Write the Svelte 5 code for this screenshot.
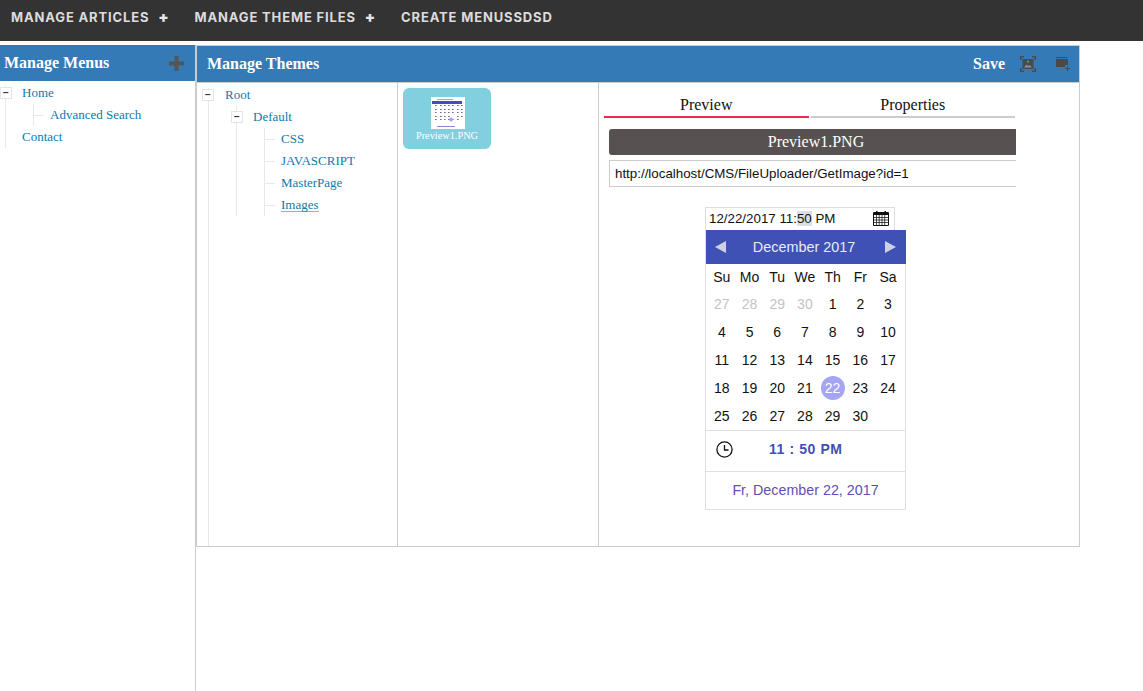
<script lang="ts">
  const weekdays = ['Su', 'Mo', 'Tu', 'We', 'Th', 'Fr', 'Sa'];
  const prev = [27, 28, 29, 30];
  const days = Array.from({ length: 30 }, (_, i) => i + 1);
  const thumbDots = [
    [4, 8], [9, 8], [13, 8], [17, 8], [21, 8], [26, 8], [30, 8],
    [4, 12], [9, 12], [13, 12], [17, 12], [21, 12], [26, 12], [30, 12],
    [4, 15], [9, 15], [13, 15], [17, 15], [21, 15], [26, 15], [30, 15],
    [4, 19], [9, 19], [13, 19], [17, 19], [26, 19], [30, 19],
    [4, 22], [9, 22], [13, 22], [17, 22], [21, 22], [26, 22]
  ];
</script>

<header class="topbar">
  <a href="#a">MANAGE ARTICLES <b>+</b></a>
  <a href="#b">MANAGE THEME FILES <b>+</b></a>
  <a href="#c">CREATE MENUSSDSD</a>
</header>

<main class="page">
  <aside class="side">
    <div class="side-head">
      <span>Manage Menus</span>
      <svg width="15" height="15" viewBox="0 0 15 15"><path d="M5.500 0h4v5.500H15v4H9.500V15h-4V9.500H0v-4h5.500z" fill="#555" /></svg>
    </div>
    <ul class="tree side-tree">
      <li class="branch">
        <i class="toggle">−</i><a href="#h">Home</a>
        <ul><li class="leaf"><a href="#s">Advanced Search</a></li></ul>
      </li>
      <li><a href="#c">Contact</a></li>
    </ul>
  </aside>

  <section class="themes">
    <div class="themes-head">
      <span class="title">Manage Themes</span>
      <span class="save">Save</span>
      <svg class="ico" width="16" height="16" viewBox="0 0 16 16" fill="#4a4a4a">
        <path d="M0 0h4v1.500H1.500V4H0zM12 0h4v4h-1.500V1.500H12zM0 12h1.500v2.500H4V16H0zM14.500 12H16v4h-4v-1.500h2.500z" />
        <path d="M2.500 3h11v10h-11z" /><path d="M4 11.500l2.500-3 1.500 1.500 1.500-1 2.500 2.500z" fill="#7f93a8" /><circle cx="8" cy="5.500" r="1" fill="#7f93a8" />
      </svg>
      <svg class="ico last" width="15" height="14" viewBox="0 0 15 14" fill="#4a4a4a">
        <path d="M0 2h12v8H0z" /><path d="M0 0h11v1H0z" />
        <path d="M9 8h5v6H9z" fill="#337ab7" />
        <path d="M11 9h1v2h2v1h-2v2h-1v-2H9v-1h2z" />
      </svg>
    </div>
    <div class="cols">
      <div class="col col-tree">
        <ul class="tree root-tree">
          <li class="branch">
            <i class="toggle">−</i><a href="#r">Root</a>
            <ul>
              <li class="branch sub">
                <i class="toggle">−</i><a href="#d">Default</a>
                <ul>
                  <li class="leaf"><a href="#1">CSS</a></li>
                  <li class="leaf"><a href="#2">JAVASCRIPT</a></li>
                  <li class="leaf"><a href="#3">MasterPage</a></li>
                  <li class="leaf"><a href="#4" class="picked">Images</a></li>
                </ul>
              </li>
            </ul>
          </li>
        </ul>
      </div>

      <div class="col col-files">
        <div class="file">
          <svg class="thumb" width="34" height="32" viewBox="0 0 34 32">
            <rect width="34" height="32" fill="#fff" />
            <rect x="1" y="4" width="30" height="3" fill="#3f51b5" />
            <rect x="6" y="2" width="16" height="1" fill="#b9a79a" />
            {#each thumbDots as d}
              <rect x={d[0]} y={d[1]} width="1.600" height="1" fill="#66688c" />
            {/each}
            <circle cx="20" cy="22.500" r="2" fill="#a5a5f2" />
            <rect x="6" y="29" width="18" height="1" fill="#8d86d0" />
          </svg>
          <span>Preview1.PNG</span>
        </div>
      </div>

      <div class="col col-detail">
        <div class="detail-clip">
          <div class="tabs">
            <div class="tab on">Preview</div>
            <div class="tab">Properties</div>
          </div>
          <div class="fname">Preview1.PNG</div>
          <div class="url">http://localhost/CMS/FileUploader/GetImage?id=1</div>

          <div class="picker">
            <div class="dt-input">
              <span>12/22/2017 11:<mark>50</mark> PM</span>
              <svg width="16" height="16" viewBox="0 0 16 16">
                <path d="M.5 2.500h15v13H.5z" fill="#fff" stroke="#111" />
                <path d="M1 2.500h14V5H1z" fill="#111" />
                <path d="M3 1h1.500v2.500H3zM11.500 1H13v2.500h-1.500z" fill="#111" />
                <path d="M1 7.500h14M1 10h14M1 12.500h14M3.500 5v10M6.200 5v10M9 5v10M11.700 5v10" stroke="#222" stroke-width=".8" />
              </svg>
            </div>
            <div class="cal">
              <div class="cal-head">
                <svg width="11" height="12" viewBox="0 0 11 12"><path d="M11 0v12L0 6z" fill="#ced1e6" /></svg>
                <span>December 2017</span>
                <svg width="11" height="12" viewBox="0 0 11 12"><path d="M0 0v12l11-6z" fill="#ced1e6" /></svg>
              </div>
              <div class="grid">
                {#each weekdays as w}<div class="wd">{w}</div>{/each}
                {#each prev as p}<div class="day dim">{p}</div>{/each}
                {#each days as d}
                  <div class="day"><span class:sel={d === 22}>{d}</span></div>
                {/each}
              </div>
              <div class="time">
                <svg width="17" height="17" viewBox="0 0 17 17" fill="none" stroke="#111" stroke-width="1.300">
                  <circle cx="8.500" cy="8.500" r="7.600" /><path d="M8.500 4v5h4" />
                </svg>
                <strong>11 : 50 PM</strong>
              </div>
              <div class="date-line">Fr, December 22, 2017</div>
            </div>
          </div>
        </div>
      </div>
    </div>
  </section>
</main>

<style>
  :global(body) {
    margin: 0;
    background: #fff;
    font-family: "Liberation Serif", "Times New Roman", serif;
    overflow: hidden;
  }
  .topbar {
    height: 41px;
    box-sizing: border-box;
    background: #333;
    display: flex;
    gap: 25px;
    padding: 9px 0 0 11px;
    font-family: Inter, "Open Sans", sans-serif;
    font-size: 13px;
    line-height: 16px;
    font-weight: 700;
    letter-spacing: 0.85px;
  }
  .topbar a { color: #dcdcdc; text-decoration: none; white-space: nowrap; }
  .topbar b { display: inline-block; margin-left: 5px; font-size: 15px; color: #e6e6e6; }
  .page {
    margin-top: 4px;
    display: flex;
    align-items: flex-start;
    height: 646px;
  }

  .side {
    width: 195px;
    height: 100%;
    flex-shrink: 0;
    border-right: 1px solid #ccc;
  }
  .side-head {
    height: 36px;
    background: #337ab7;
    color: #fff;
    display: flex;
    align-items: center;
    justify-content: space-between;
    padding: 0 11px 0 4px;
    font-size: 16px;
    font-weight: 700;
  }

  .tree, .tree ul { list-style: none; margin: 0; padding: 0; }
  .tree { font-size: 13px; line-height: 22px; }
  .tree a { color: #0e7bac; text-decoration: none; }
  .tree a.picked { border-bottom: 1px solid #aaa; line-height: 13px; display: inline-block; }
  .tree li { position: relative; }
  .toggle {
    position: absolute;
    top: 5px;
    width: 10px;
    height: 10px;
    border: 1px solid #e4e4e4;
    background: #fff;
    font: 700 10px/10px "Liberation Sans", sans-serif;
    text-align: center;
    color: #333;
    z-index: 1;
  }

  .side-tree { padding: 1px 0 0 22px; position: relative; }
  .side-tree::before {
    content: "";
    position: absolute;
    left: 5px;
    top: 4px;
    height: 63px;
    border-left: 1px solid #e9e9e9;
  }
  .side-tree > li > .toggle { left: -22px; }
  .side-tree > li > ul { padding-left: 28px; }
  .leaf::before {
    content: "";
    position: absolute;
    top: 0;
    left: -17px;
    width: 10px;
    height: 11px;
    border-left: 1px solid #e9e9e9;
    border-bottom: 1px solid #e9e9e9;
  }
  .leaf::after {
    content: "";
    position: absolute;
    left: -17px;
    top: 11px;
    height: 11px;
    border-left: 1px solid #e9e9e9;
  }

  .themes {
    width: 884px;
    height: 502px;
    box-sizing: border-box;
    border: 1px solid #ccc;
    display: flex;
    flex-direction: column;
  }
  .themes-head {
    height: 36px;
    flex-shrink: 0;
    background: #337ab7;
    border-bottom: 1px solid #ccc;
    color: #fff;
    display: flex;
    align-items: center;
    padding: 0 8px 0 10px;
    font-size: 16px;
    font-weight: 700;
  }
  .title { flex: 1; }
  .save { margin-right: 15px; }
  .ico { margin-right: 20px; }
  .ico.last { margin-right: 0; }

  .cols { flex: 1; display: flex; min-height: 0; }
  .col { box-sizing: border-box; border-right: 1px solid #ccc; position: relative; }
  .col-tree { width: 201px; }
  .col-files { width: 201px; padding: 5px; }
  .col-detail { flex: 1; border-right: 0; overflow: hidden; }

  .root-tree { padding: 1px 0 0 28px; position: relative; }
  .root-tree::before {
    content: "";
    position: absolute;
    left: 11px;
    top: 5px;
    height: 458px;
    border-left: 1px solid #e9e9e9;
  }
  .root-tree > li > .toggle { left: -23px; }
  .root-tree > li > ul { padding-left: 28px; }
  .sub > .toggle { left: -22px; }
  .sub::before {
    content: "";
    position: absolute;
    left: -17px;
    top: 0;
    height: 110px;
    border-left: 1px solid #e9e9e9;
  }
  .sub > ul { padding-left: 28px; }

  .file {
    width: 88px;
    height: 61px;
    border-radius: 6px;
    background: #81cfdf;
    color: #fff;
    font-size: 10.300px;
    display: flex;
    flex-direction: column;
    align-items: center;
    padding-top: 9px;
    box-sizing: border-box;
    line-height: 12px;
  }
  .thumb { margin: 0 0 1px 2px; }

  .detail-clip { width: 417px; overflow: hidden; padding-left: 5px; box-sizing: border-box; }
  .tabs { display: flex; gap: 2px; margin-top: 11px; width: 411px; }
  .tab {
    flex: 1;
    text-align: center;
    font-size: 16px;
    line-height: 22px;
    height: 22px;
    border-bottom: 2px solid #ccc;
    color: #111;
  }
  .tab.on { border-bottom-color: #f5234f; }
  .fname {
    margin: 11px 0 0 5px;
    height: 26px;
    width: 420px;
    background: #575151;
    border-radius: 3px 0 0 3px;
    color: #fff;
    font-size: 16px;
    line-height: 26px;
    text-align: center;
    padding-right: 6px;
    box-sizing: border-box;
  }
  .url {
    margin: 5px 0 0 5px;
    height: 27px;
    width: 420px;
    box-sizing: border-box;
    border: 1px solid #ccc;
    padding-left: 5px;
    font: 13.330px/25px "Liberation Sans", Arial, sans-serif;
    color: #111;
  }

  .picker {
    margin: 20px 0 0 101px;
    font-family: "Liberation Sans", Arial, sans-serif;
    width: 201px;
  }
  .dt-input {
    width: 190px;
    height: 23px;
    box-sizing: border-box;
    border: 1px solid #ddd;
    border-bottom: 0;
    display: flex;
    align-items: center;
    justify-content: space-between;
    padding: 0 5px 2px 3px;
    font-size: 13.330px;
    color: #111;
  }
  .dt-input mark { background: #dcdfe3; color: inherit; }
  .cal {
    width: 201px;
    height: 280px;
    box-sizing: border-box;
    border: 1px solid #e0e0e0;
    border-top: 0;
  }
  .cal-head {
    height: 34px;
    margin-right: -1px;
    background: #3f51b5;
    color: #e8eaf6;
    display: flex;
    align-items: center;
    justify-content: space-between;
    padding: 0 10px 0 9px;
    font-size: 14.400px;
  }
  .cal-head span { margin-right: 3px; }
  .grid {
    display: grid;
    grid-template-columns: repeat(7, 27.700px);
    grid-template-rows: 26px repeat(5, 28px);
    padding: 0 2px;
    height: 166px;
    font-size: 14px;
    color: #111;
    text-align: center;
    line-height: 28px;
    border-bottom: 1px solid #e0e0e0;
  }
  .wd { line-height: 26px; }
  .day { display: flex; align-items: center; justify-content: center; }
  .day span { display: block; width: 24px; height: 24px; line-height: 24px; border-radius: 50%; }
  .dim { color: #c4c4c4; }
  .sel { background: #a5a5f2; color: #fff; }
  .time {
    height: 36px;
    padding: 0 0 4px 10px;
    display: flex;
    align-items: center;
    border-bottom: 1px solid #e0e0e0;
    font-size: 14px;
  }
  .time strong { margin-left: 36px; color: #3f51b5; letter-spacing: 0.4px; word-spacing: 0.5px; }
  .date-line {
    height: 38px;
    line-height: 37px;
    text-align: center;
    font-size: 14.300px;
    color: #5f4fb0;
  }
</style>
